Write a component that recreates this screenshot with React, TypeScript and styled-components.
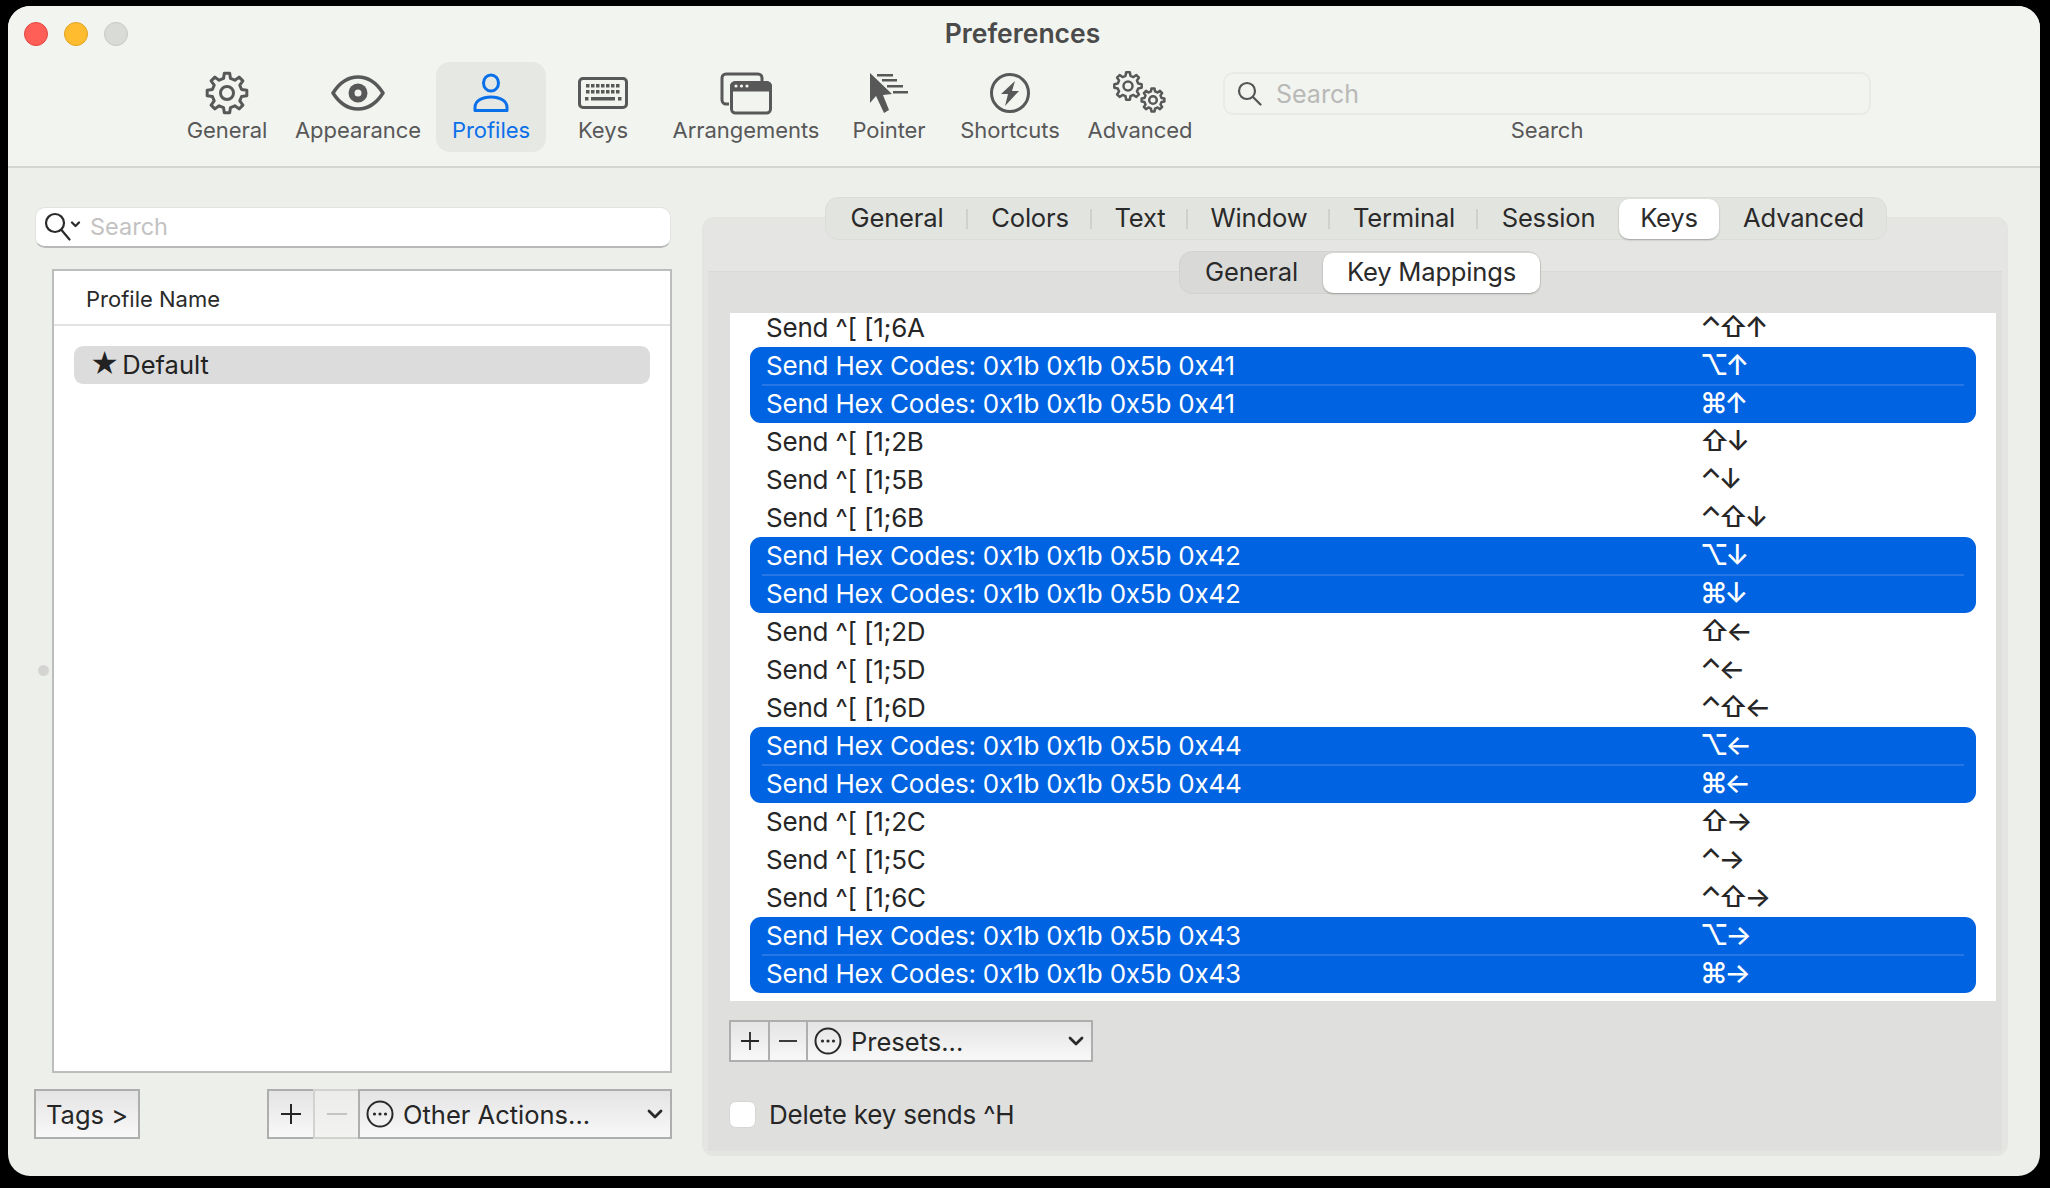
import { Fragment } from "react";
import styled, { createGlobalStyle } from "styled-components";

const GlobalStyle = createGlobalStyle`
  html, body {
    margin: 0;
    height: 100%;
    background: #000;
  }
  body {
    font-family: Inter, "Liberation Sans", sans-serif;
    -webkit-font-smoothing: antialiased;
  }
`;

const Window = styled.div`
  width: 2032px;
  height: 1170px;
  margin: 6px 0 0 8px;
  border-radius: 22px;
  background: #edefeb;
  overflow: hidden;
  display: flex;
  flex-direction: column;
`;

const Header = styled.header`
  height: 160px;
  background: #f2f4f0;
  border-bottom: 2px solid #d4d6d2;
  flex: none;
`;

const TitleRow = styled.div`
  height: 56px;
  display: grid;
  grid-template-columns: 1fr auto 1fr;
  align-items: center;
`;

const Lights = styled.div`
  display: flex;
  gap: 16px;
  padding: 0 0 0 16px;
`;

const Light = styled.span<{ $color: string; $edge: string }>`
  width: 24px;
  height: 24px;
  border-radius: 50%;
  box-sizing: border-box;
  background: ${(p) => p.$color};
  border: 1px solid ${(p) => p.$edge};
`;

const Title = styled.div`
  font-size: 26.500px;
  font-weight: 600;
  color: #4a4a4a;
  padding: 0 3px 3px 0;
`;

const Toolbar = styled.div`
  display: flex;
  padding-left: 166px;
`;

const ToolItem = styled.div<{ $w: number; $active?: boolean }>`
  width: ${(p) => p.$w}px;
  height: 90px;
  box-sizing: border-box;
  padding-top: 10px;
  display: flex;
  flex-direction: column;
  align-items: center;
  border-radius: 14px;
  background: ${(p) => (p.$active ? "#e6e8e4" : "transparent")};
  color: ${(p) => (p.$active ? "#0a70ea" : "#585858")};
`;

const ToolIcon = styled.div`
  height: 42px;
  display: flex;
  align-items: center;
  justify-content: center;
`;

const ToolLabel = styled.div`
  margin-top: 2px;
  font-size: 22px;
  letter-spacing: -0.050px;
  line-height: 28px;
  white-space: nowrap;
`;

const ToolSearch = styled.div`
  margin-left: 17px;
  width: 648px;
  padding-top: 10px;
  display: flex;
  flex-direction: column;
  align-items: center;
  color: #585858;
`;

const ToolSearchBox = styled.div`
  width: 100%;
  height: 43px;
  margin-bottom: -1px;
  box-sizing: border-box;
  border: 2px solid #e9ebe7;
  border-radius: 10px;
  padding-left: 12px;
  display: flex;
  align-items: center;
  gap: 14px;
  font-size: 25px;
  color: #b9b9b7;
`;

const Content = styled.main`
  flex: 1;
  display: flex;
  position: relative;
`;

const SplitGrip = styled.span`
  position: absolute;
  left: 30px;
  top: 497px;
  width: 11px;
  height: 11px;
  border-radius: 50%;
  background: #d4d5d2;
`;

const LeftColumn = styled.section`
  width: 638px;
  margin-left: 26px;
  display: flex;
  flex-direction: column;
`;

const ProfileSearch = styled.div`
  margin: 39px 1px 0;
  height: 41px;
  box-sizing: border-box;
  background: #fff;
  border-radius: 10px;
  border: 1px solid #e2e3e0;
  border-bottom: 2px solid #b9bab8;
  padding: 0 0 2px 8px;
  display: flex;
  align-items: center;
  gap: 9px;
  font-size: 23.500px;
  color: #c2c2c2;
`;

const ProfileTable = styled.div`
  margin: 21px 0 0 18px;
  height: 804px;
  box-sizing: border-box;
  background: #fff;
  border: 2px solid #bdbdbd;
`;

const ProfileHead = styled.div`
  height: 55px;
  box-sizing: border-box;
  border-bottom: 2px solid #e3e3e3;
  padding: 2px 0 0 32px;
  display: flex;
  align-items: center;
  font-size: 22px;
  color: #2a2a2a;
`;

const ProfileRow = styled.div`
  margin: 20px 20px 0;
  height: 36px;
  border-radius: 9px;
  background: #dcdcdc;
  padding: 0 0 2px 16px;
  display: flex;
  align-items: center;
  gap: 3px;
  font-size: 25.500px;
  color: #222;
`;

const Star = styled.span`
  font-size: 28px;
  line-height: 1;
`;

const BottomBar = styled.div`
  margin-top: 16px;
  height: 50px;
  display: flex;
`;

const ButtonFace = styled.div<{ $w?: number; $dim?: boolean }>`
  flex: none;
  width: ${(p) => (p.$w ? `${p.$w}px` : "auto")};
  box-sizing: border-box;
  height: 100%;
  display: flex;
  align-items: center;
  justify-content: center;
  white-space: nowrap;
  border: 2.500px solid ${(p) => (p.$dim ? "#d2d3d0" : "#aeaeae")};
  background: linear-gradient(${(p) => (p.$dim ? "#ecedea, #f2f3f0" : "#e4e4e4, #f8f8f8")});
  color: ${(p) => (p.$dim ? "#c4c5c2" : "#262626")};
  font-size: 25.500px;
  & + & {
    margin-left: -2px;
  }
`;

const Spacer = styled.div`
  flex: 1;
`;

const PopupFace = styled(ButtonFace)`
  justify-content: flex-start;
  gap: 9px;
  padding-left: 6px;
`;

const Chevron = styled.span`
  margin-left: auto;
  margin-right: 7px;
  display: flex;
`;

const RightPanel = styled.section`
  width: 1306px;
  margin: 49px 0 0 30px;
  height: 939px;
  box-sizing: border-box;
  border: 2px solid #e3e5e1;
  border-radius: 12px;
  background: #e5e6e4;
  padding: 0 4px 3px;
  display: flex;
  flex-direction: column;
`;

const TabBar = styled.div`
  align-self: center;
  margin: -22px 0 0 2px;
  width: 1062px;
  height: 43px;
  box-sizing: border-box;
  border-radius: 13px;
  background: #e2e4e0;
  border: 1px solid #dbddd9;
  display: flex;
  align-items: center;
`;

const Tab = styled.div<{ $w: number; $on?: boolean }>`
  flex: none;
  width: ${(p) => p.$w}px;
  height: 40px;
  box-sizing: border-box;
  padding-bottom: 2px;
  display: flex;
  align-items: center;
  justify-content: center;
  font-size: 25.600px;
  letter-spacing: -0.200px;
  color: #2a2a2a;
  border-radius: 10px;
  background: ${(p) => (p.$on ? "#fff" : "transparent")};
  box-shadow: ${(p) => (p.$on ? "0 1px 2px rgba(0,0,0,.28)" : "none")};
`;

const TabDivider = styled.span`
  flex: none;
  width: 2px;
  height: 20px;
  margin-left: -2px;
  background: #cfd1cd;
`;

const InnerPanel = styled.div`
  margin-top: 31px;
  flex: 1;
  background: #dfdfdd;
  border-top: 1px solid #d9d9d7;
  display: flex;
  flex-direction: column;
  padding-left: 21px;
`;

const SubTabs = styled.div`
  margin: -21px 0 0 450px;
  width: 362px;
  height: 43px;
  box-sizing: border-box;
  border-radius: 13px;
  background: #d9dad7;
  border: 1px solid #d2d3d0;
  display: flex;
  align-items: center;
`;

const KeyTable = styled.div`
  margin: 19px 0 0 1px;
  width: 1266px;
  height: 688px;
  background: #fff;
  overflow: hidden;
`;

const KeyList = styled.div`
  margin-top: -4px;
  padding: 0 20px;
  display: flex;
  flex-direction: column;
`;

const KeyGroup = styled.div<{ $selected?: boolean }>`
  border-radius: 11px;
  background: ${(p) => (p.$selected ? "#0063e1" : "transparent")};
  color: ${(p) => (p.$selected ? "#fff" : "#262626")};
`;

const KeyRow = styled.div`
  height: 38px;
  box-sizing: border-box;
  padding: 0 0 2px 16px;
  display: grid;
  grid-template-columns: 934px 1fr;
  align-items: center;
  font-size: 26px;
  letter-spacing: -0.200px;
  white-space: nowrap;
`;

const KeySeparator = styled.div`
  height: 2px;
  margin: -1px 12px;
  background: #2877e6;
  position: relative;
`;

const Shortcut = styled.span`
  font-size: 28px;
  font-weight: 500;
  letter-spacing: -3.500px;
`;

const PresetBar = styled.div`
  margin-top: 19px;
  height: 42px;
  display: flex;
  width: 364px;
`;

const CheckRow = styled.label`
  margin-top: 37px;
  display: flex;
  align-items: center;
  gap: 13px;
  font-size: 26px;
  letter-spacing: -0.200px;
  color: #262626;
`;

const CheckBox = styled.span`
  width: 27px;
  height: 27px;
  box-sizing: border-box;
  background: #fff;
  border: 1px solid #d6d6d6;
  border-radius: 7px;
`;

function gearPath(cx: number, cy: number, R: number, r: number, n: number) {
  const pts: string[] = [];
  const step = (Math.PI * 2) / n;
  for (let i = 0; i < n; i++) {
    const a = i * step - Math.PI / 2;
    const spots: [number, number][] = [
      [r, a - step * 0.3],
      [R, a - step * 0.17],
      [R, a + step * 0.17],
      [r, a + step * 0.3],
    ];
    spots.forEach(([rad, t]) => {
      pts.push(`${(cx + rad * Math.cos(t)).toFixed(2)} ${(cy + rad * Math.sin(t)).toFixed(2)}`);
    });
  }
  return `M${pts.join("L")}Z`;
}

function GearIcon() {
  return (
    <svg width="44" height="44" viewBox="0 0 44 44" fill="none" stroke="currentColor" strokeWidth="3" strokeLinejoin="round">
      <path d={gearPath(22, 22, 20, 15, 8)} />
      <circle cx="22" cy="22" r="6.500" />
    </svg>
  );
}

function EyeIcon() {
  return (
    <svg width="54" height="36" viewBox="0 0 54 36" fill="none">
      <path d="M2 18C9 7 17 2 27 2s18 5 25 16c-7 11-15 16-25 16S9 29 2 18Z" stroke="currentColor" strokeWidth="3.500" strokeLinejoin="round" />
      <circle cx="27" cy="18" r="9.500" fill="currentColor" />
      <circle cx="27" cy="18" r="3.500" fill="#f2f4f0" />
    </svg>
  );
}

function PersonIcon() {
  return (
    <svg width="38" height="40" viewBox="0 0 38 40" fill="none" stroke="currentColor" strokeWidth="3">
      <ellipse cx="19" cy="10" rx="7.500" ry="8" />
      <path d="M3 37.500v-3C3 28 10 24 19 24s16 4 16 10.500v3Z" strokeLinejoin="round" />
    </svg>
  );
}

function KeyboardIcon() {
  const rows = [9, 15];
  return (
    <svg width="50" height="32" viewBox="0 0 50 32" fill="none">
      <rect x="1.500" y="1.500" width="47" height="29" rx="3.500" stroke="currentColor" strokeWidth="3" />
      {rows.map((y) =>
        [8, 13, 18, 23, 28, 33, 38].map((x) => (
          <rect key={`${x}-${y}`} x={x} y={y - 2} width="3.500" height="3.500" fill="currentColor" />
        ))
      )}
      <rect x="7" y="20" width="3.500" height="3.500" fill="currentColor" />
      <rect x="13" y="20" width="24" height="3.500" fill="currentColor" />
      <rect x="40" y="20" width="3.500" height="3.500" fill="currentColor" />
    </svg>
  );
}

function ArrangeIcon() {
  return (
    <svg width="52" height="43" viewBox="0 0 52 43" fill="none" stroke="currentColor" strokeWidth="3">
      <path d="M9 32H6a4 4 0 0 1-4-4V6a4 4 0 0 1 4-4h32a4 4 0 0 1 4 4v4" />
      <rect x="11.500" y="10.500" width="39" height="30.500" rx="4" />
      <path d="M11.500 14.500a4 4 0 0 1 4-4h31a4 4 0 0 1 4 4V18H11.500Z" fill="currentColor" />
      <g fill="#f2f4f0" stroke="none">
        <circle cx="16" cy="14" r="1.600" />
        <circle cx="21.500" cy="14" r="1.600" />
        <circle cx="27" cy="14" r="1.600" />
      </g>
    </svg>
  );
}

function PointerIcon() {
  return (
    <svg width="40" height="42" viewBox="0 0 40 42" fill="currentColor">
      <path d="M1 1v30l6-7 8 17 5-3-6-15 9-1Z" />
      <rect x="8" y="2" width="16" height="2.500" />
      <rect x="13" y="7" width="15" height="2.500" />
      <rect x="18" y="13" width="16" height="2.500" />
      <rect x="24" y="19" width="15" height="2.500" />
    </svg>
  );
}

function BoltIcon() {
  return (
    <svg width="42" height="42" viewBox="0 0 42 42" fill="none">
      <circle cx="21" cy="21" r="18.500" stroke="currentColor" strokeWidth="3" />
      <path d="M26 9L12 22h7L16 34 30 19h-7Z" fill="currentColor" />
    </svg>
  );
}

function GearsIcon() {
  return (
    <svg width="54" height="44" viewBox="0 0 54 44" fill="none" stroke="currentColor" strokeWidth="2.500" strokeLinejoin="round">
      <path d={gearPath(15, 15, 13.800, 10.500, 8)} />
      <circle cx="15" cy="15" r="4.500" />
      <path d={gearPath(40, 29, 11.500, 8.800, 8)} />
      <circle cx="40" cy="29" r="3.800" />
    </svg>
  );
}

function SearchGlass() {
  return (
    <svg width="25" height="25" viewBox="0 0 25 25" fill="none" stroke="#555" strokeWidth="2.200" strokeLinecap="round">
      <circle cx="10" cy="10" r="8" />
      <path d="M16 16l7.500 7.500" />
    </svg>
  );
}

function SearchMenuGlass() {
  return (
    <svg width="37" height="30" viewBox="0 0 37 30" fill="none" stroke="#2a2a2a" strokeWidth="2.200" strokeLinecap="round" strokeLinejoin="round">
      <circle cx="11" cy="12" r="9" />
      <path d="M17.500 19l8 9.500M28 11.500l3.500 3.500 3.500-3.500" />
    </svg>
  );
}

function EllipsisCircle() {
  return (
    <svg width="28" height="28" viewBox="0 0 28 28" fill="none">
      <circle cx="14" cy="14" r="12.500" stroke="#2a2a2a" strokeWidth="2" />
      <g fill="#2a2a2a">
        <circle cx="8.500" cy="14" r="1.600" />
        <circle cx="14" cy="14" r="1.600" />
        <circle cx="19.500" cy="14" r="1.600" />
      </g>
    </svg>
  );
}

function PopupChevron() {
  return (
    <svg width="16" height="10" viewBox="0 0 16 10" fill="none" stroke="#2a2a2a" strokeWidth="2.800" strokeLinecap="round" strokeLinejoin="round">
      <path d="M2 2l6 6 6-6" />
    </svg>
  );
}

function PlusIcon({ size }: { size: number }) {
  return (
    <svg width={size} height={size} viewBox="0 0 20 20" stroke="currentColor" strokeWidth="2">
      <path d="M0 10h20M10 0v20" />
    </svg>
  );
}

function MinusIcon({ size }: { size: number }) {
  return (
    <svg width={size} height={size} viewBox="0 0 20 20" stroke="currentColor" strokeWidth="2">
      <path d="M0 10h20" />
    </svg>
  );
}

const toolItems = [
  { label: "General", w: 106, icon: <GearIcon /> },
  { label: "Appearance", w: 156, icon: <EyeIcon /> },
  { label: "Profiles", w: 110, icon: <PersonIcon />, active: true },
  { label: "Keys", w: 114, icon: <KeyboardIcon /> },
  { label: "Arrangements", w: 172, icon: <ArrangeIcon /> },
  { label: "Pointer", w: 114, icon: <PointerIcon /> },
  { label: "Shortcuts", w: 128, icon: <BoltIcon /> },
  { label: "Advanced", w: 132, icon: <GearsIcon /> },
];

const tabs = [
  { label: "General", w: 142, divider: true },
  { label: "Colors", w: 124, divider: true },
  { label: "Text", w: 96, divider: true },
  { label: "Window", w: 142, divider: true },
  { label: "Terminal", w: 148, divider: true },
  { label: "Session", w: 141 },
  { label: "Keys", w: 100, on: true },
  { label: "Advanced", w: 169 },
];

const hex = (last: string, arrow: string) => [
  { action: `Send Hex Codes: 0x1b 0x1b 0x5b ${last}`, keys: `⌥${arrow}` },
  { action: `Send Hex Codes: 0x1b 0x1b 0x5b ${last}`, keys: `⌘${arrow}` },
];

const plain = (letter: string, arrow: string) => [
  { action: `Send ^[ [1;2${letter}`, keys: `⇧${arrow}` },
  { action: `Send ^[ [1;5${letter}`, keys: `⌃${arrow}` },
  { action: `Send ^[ [1;6${letter}`, keys: `⌃⇧${arrow}` },
];

const keyGroups = [
  { rows: [{ action: "Send ^[ [1;6A", keys: "⌃⇧↑" }] },
  { selected: true, rows: hex("0x41", "↑") },
  { rows: plain("B", "↓") },
  { selected: true, rows: hex("0x42", "↓") },
  { rows: plain("D", "←") },
  { selected: true, rows: hex("0x44", "←") },
  { rows: plain("C", "→") },
  { selected: true, rows: hex("0x43", "→") },
  { rows: [{ action: "Send ^[ [1;2H", keys: "" }] },
];

export default function App() {
  return (
    <>
      <GlobalStyle />
      <Window>
        <Header>
          <TitleRow>
            <Lights>
              <Light $color="#ff5f57" $edge="#e0443e" />
              <Light $color="#febc2e" $edge="#dea123" />
              <Light $color="#d9dbd7" $edge="#c6c8c4" />
            </Lights>
            <Title>Preferences</Title>
            <span />
          </TitleRow>
          <Toolbar>
            {toolItems.map((item) => (
              <ToolItem key={item.label} $w={item.w} $active={item.active}>
                <ToolIcon>{item.icon}</ToolIcon>
                <ToolLabel>{item.label}</ToolLabel>
              </ToolItem>
            ))}
            <ToolSearch>
              <ToolSearchBox>
                <SearchGlass />
                Search
              </ToolSearchBox>
              <ToolLabel>Search</ToolLabel>
            </ToolSearch>
          </Toolbar>
        </Header>
        <Content>
          <SplitGrip />
          <LeftColumn>
            <ProfileSearch>
              <SearchMenuGlass />
              Search
            </ProfileSearch>
            <ProfileTable>
              <ProfileHead>Profile Name</ProfileHead>
              <ProfileRow>
                <Star>★</Star>
                Default
              </ProfileRow>
            </ProfileTable>
            <BottomBar>
              <ButtonFace $w={106}>Tags &gt;</ButtonFace>
              <Spacer />
              <ButtonFace $w={48}>
                <PlusIcon size={20} />
              </ButtonFace>
              <ButtonFace $w={47} $dim>
                <MinusIcon size={20} />
              </ButtonFace>
              <PopupFace $w={314}>
                <EllipsisCircle />
                Other Actions...
                <Chevron>
                  <PopupChevron />
                </Chevron>
              </PopupFace>
            </BottomBar>
          </LeftColumn>
          <RightPanel>
            <TabBar>
              {tabs.map((tab) => (
                <Fragment key={tab.label}>
                  <Tab $w={tab.w} $on={tab.on}>{tab.label}</Tab>
                  {tab.divider && <TabDivider />}
                </Fragment>
              ))}
            </TabBar>
            <InnerPanel>
              <SubTabs>
                <Tab $w={143}>General</Tab>
                <Tab $w={217} $on>Key Mappings</Tab>
              </SubTabs>
              <KeyTable>
                <KeyList>
                  {keyGroups.map((group, i) => (
                    <KeyGroup key={i} $selected={group.selected}>
                      {group.rows.map((row, j) => (
                        <div key={j}>
                          {group.selected && j === 1 && <KeySeparator />}
                          <KeyRow>
                            <span>{row.action}</span>
                            <Shortcut>{row.keys}</Shortcut>
                          </KeyRow>
                        </div>
                      ))}
                    </KeyGroup>
                  ))}
                </KeyList>
              </KeyTable>
              <PresetBar>
                <ButtonFace $w={41}>
                  <PlusIcon size={18} />
                </ButtonFace>
                <ButtonFace $w={40}>
                  <MinusIcon size={18} />
                </ButtonFace>
                <PopupFace $w={287}>
                  <EllipsisCircle />
                  Presets...
                  <Chevron>
                    <PopupChevron />
                  </Chevron>
                </PopupFace>
              </PresetBar>
              <CheckRow>
                <CheckBox />
                Delete key sends ^H
              </CheckRow>
            </InnerPanel>
          </RightPanel>
        </Content>
      </Window>
    </>
  );
}
